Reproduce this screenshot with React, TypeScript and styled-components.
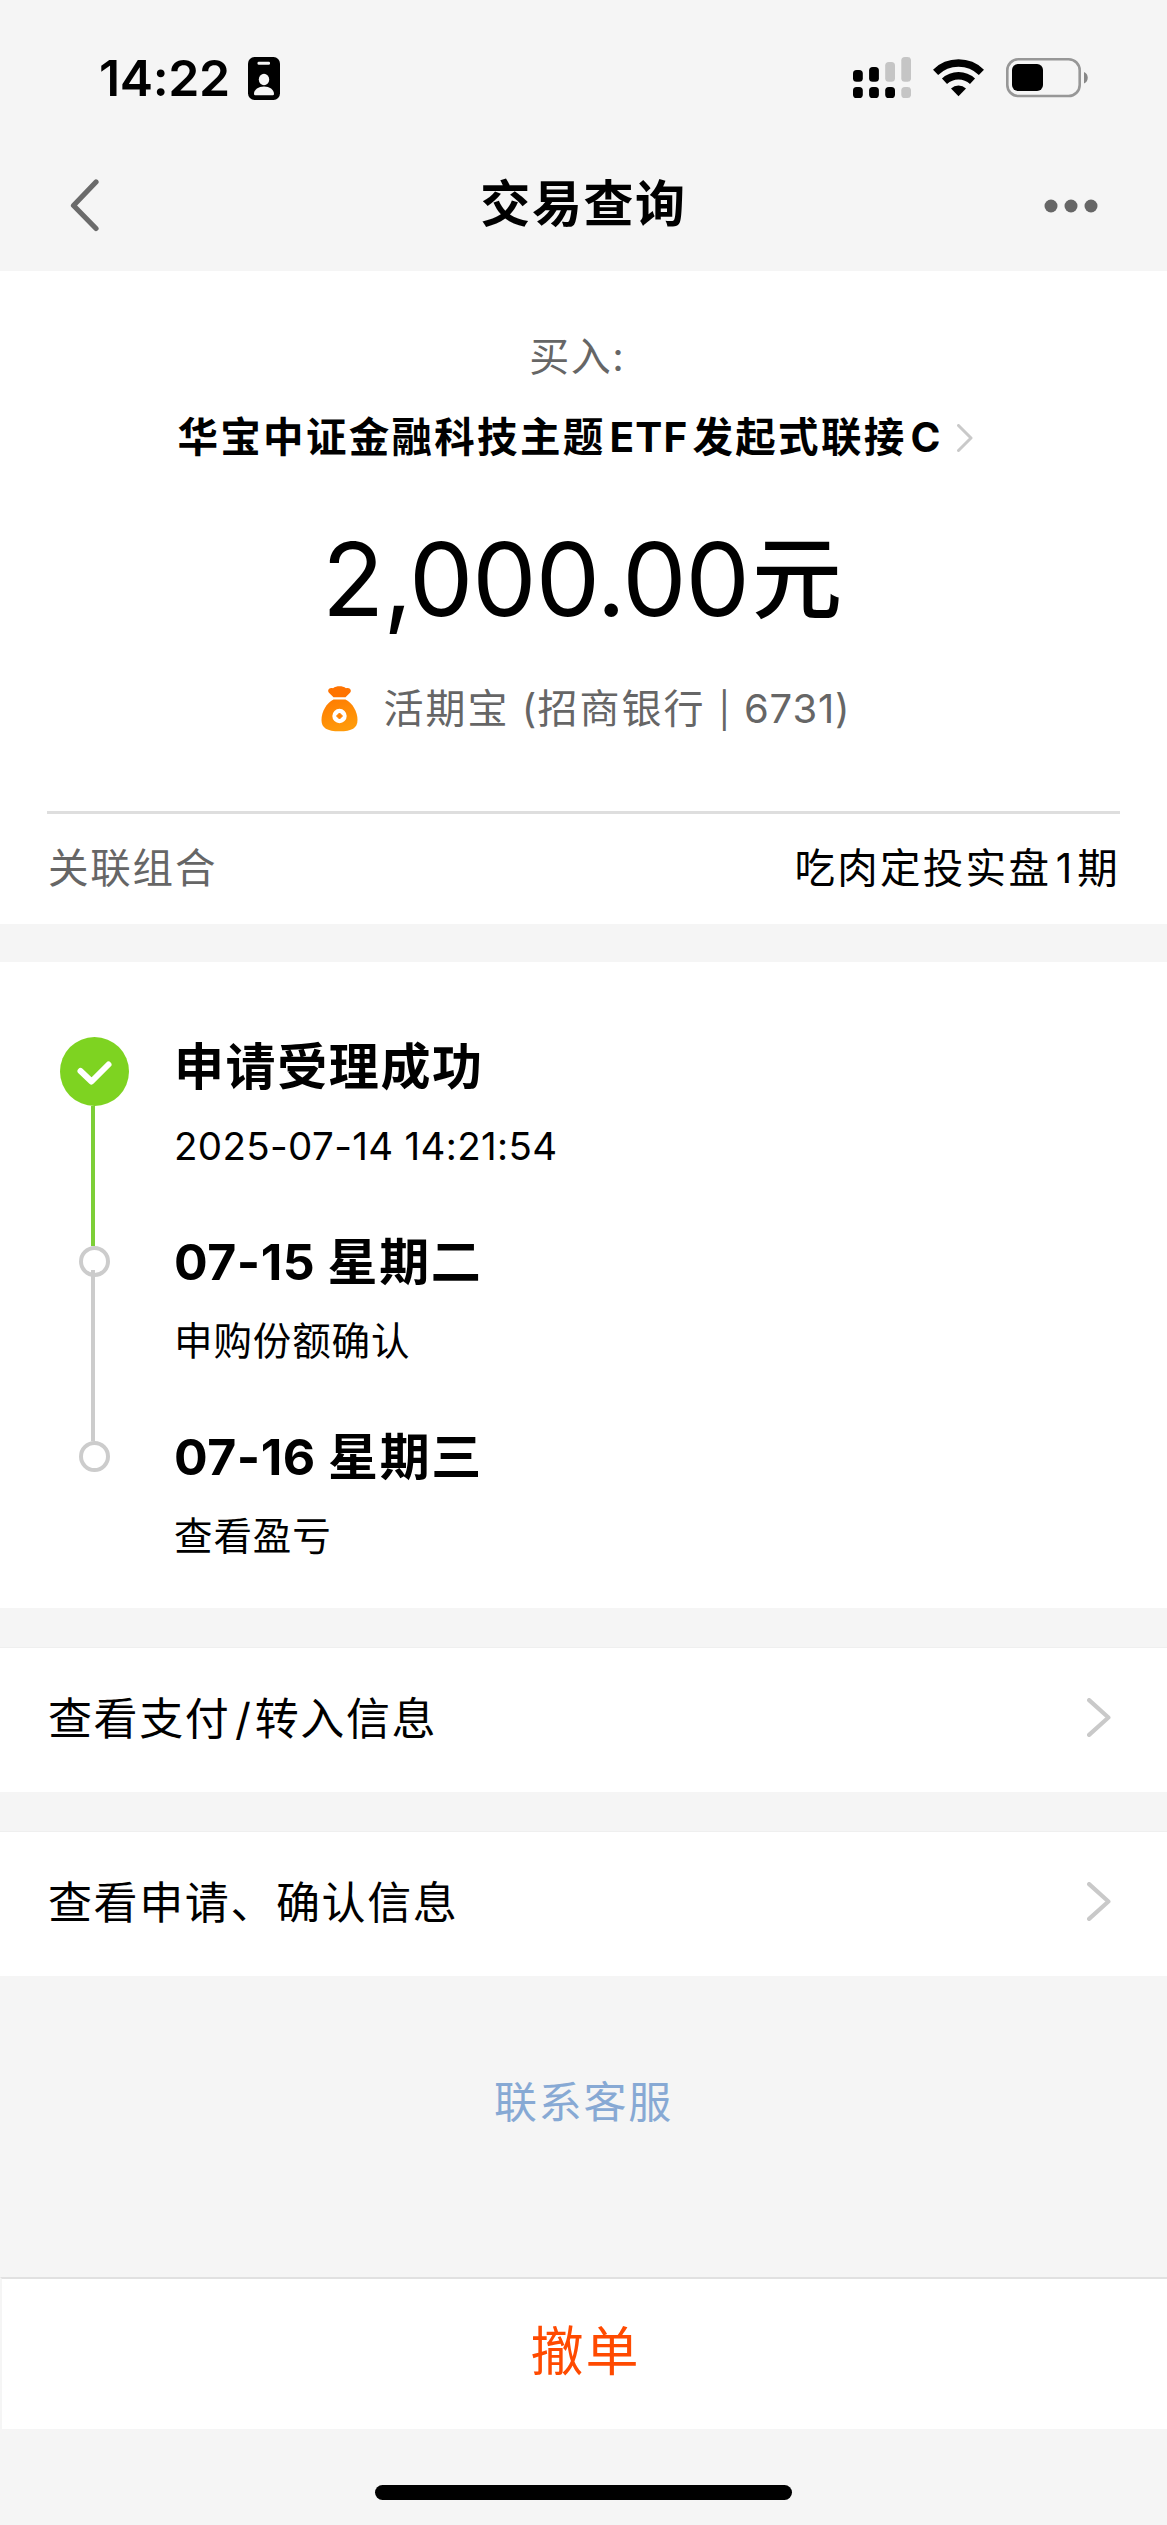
import React from "react";
import styled, { createGlobalStyle } from "styled-components";

const GlobalStyle = createGlobalStyle`
  * { box-sizing: border-box; }
  body {
    margin: 0;
    background: #f4f4f4;
    font-family: Inter, "Noto Sans CJK SC", "Noto Sans", sans-serif;
    color: #000;
  }
  svg { display: block; flex: none; }
`;

const Screen = styled.div`
  width: 1167px;
  height: 2525px;
  background: #f5f5f5;
  display: flex;
  flex-direction: column;
  overflow: hidden;

  & > * { flex: none; }
`;

const StatusBar = styled.header`
  height: 136px;
  padding: 57px 79px 0 99px;
  display: flex;
  align-items: flex-start;
  justify-content: space-between;
`;

const StatusGroup = styled.div<{ $gap: number }>`
  display: flex;
  align-items: center;
  gap: ${(p) => p.$gap}px;
  height: 43px;
`;

const Clock = styled.span`
  font-size: 50px;
  font-weight: 600;
  line-height: 43px;
  letter-spacing: -0.4px;
`;

const NavBar = styled.nav`
  height: 135px;
  padding: 0 69px 0 69px;
  display: grid;
  grid-template-columns: 60px 1fr 60px;
  align-items: center;
`;

const NavStart = styled.div`
  padding-top: 3px;
`;

const NavTitle = styled.h1`
  margin: 0;
  text-align: center;
  font-size: 50px;
  font-weight: 600;
  line-height: 60px;
  letter-spacing: 1.6px;
`;

const NavEnd = styled.div`
  display: flex;
  justify-content: flex-end;
  padding-top: 5px;
`;

const Summary = styled.section`
  height: 653px;
  padding: 56px 47px 0;
  background: #fff;
  display: flex;
  flex-direction: column;

  & > * { flex: none; }
`;

const Centered = styled.div<{ $height: number }>`
  display: flex;
  justify-content: center;
  align-items: center;
  height: ${(p) => p.$height}px;
`;

const Text = styled.span<{
  $size: number;
  $spacing?: number;
  $weight?: number;
  $color?: string;
}>`
  white-space: pre;
  line-height: 1.2;
  font-size: ${(p) => p.$size}px;
  letter-spacing: ${(p) => p.$spacing ?? 0}px;
  font-weight: ${(p) => p.$weight ?? 400};
  color: ${(p) => p.$color ?? "#000"};
`;

const Latin = styled.span<{ $before?: number; $after?: number; $spacing?: number; $weight?: number }>`
  margin-left: ${(p) => p.$before ?? 0}px;
  margin-right: ${(p) => p.$after ?? 0}px;
  letter-spacing: ${(p) => p.$spacing ?? 0}px;
  font-weight: ${(p) => p.$weight ?? "inherit"};
`;

const Pipe = styled.span`
  margin: 0 1px;
  font-size: 35px;
`;

const Direction = styled(Centered)`
  padding-right: 14px;
`;

const FundName = styled(Centered)`
  margin-top: 21px;
  padding-right: 16px;
  gap: 17px;
`;

const Amount = styled(Centered)`
  margin-top: 51px;
  padding-right: 3px;
`;

const Unit = styled(Text)`
  margin: 0 0 1px 3px;
`;

const Account = styled(Centered)`
  margin-top: 40px;
  padding-left: 4px;
  gap: 26px;
`;

const LinkedPlan = styled.div`
  margin-top: 72px;
  height: 113px;
  border-top: 3px solid #dedede;
  padding: 0 0 0 1px;
  display: flex;
  justify-content: space-between;
  align-items: center;
`;

const Timeline = styled.section`
  margin-top: 38px;
  height: 646px;
  padding: 75px 60px 0;
  background: #fff;
`;

const Step = styled.div<{ $height: number }>`
  display: flex;
  height: ${(p) => p.$height}px;
`;

const Rail = styled.div`
  width: 69px;
  margin-right: 45px;
  display: flex;
  flex-direction: column;
  align-items: center;
`;

const RailLine = styled.div<{ $color: string; $overlap?: number }>`
  width: 4px;
  flex: 1;
  margin: ${(p) => -(p.$overlap ?? 0)}px 3px 0 0;
  background: ${(p) => p.$color};
`;

const Dot = styled.div`
  flex: none;
  width: 31px;
  height: 31px;
  border: 4px solid #ccc;
  border-radius: 50%;
`;

const StepBody = styled.div<{ $shift: number }>`
  display: flex;
  flex-direction: column;
  margin-top: ${(p) => p.$shift}px;
`;

const StepTitle = styled.h2`
  margin: 0;
  font-size: 50px;
  font-weight: 600;
  line-height: 60px;
  letter-spacing: 1.6px;
  white-space: pre;
`;

const StepNote = styled.div<{ $spacing: number }>`
  margin-top: 24px;
  font-size: 38.5px;
  line-height: 50px;
  letter-spacing: ${(p) => p.$spacing}px;
`;

const LinkRow = styled.div`
  margin-top: 40px;
  height: 144px;
  padding: 0 56px 1px 48px;
  background: #fff;
  box-shadow: 0 -1px 0 #efefef;
  display: flex;
  justify-content: space-between;
  align-items: center;

  svg { margin-bottom: 4px; }
`;

const Support = styled(Centered)`
  margin-top: 102px;
`;

const CancelBar = styled.button`
  margin: 149px 0 0;
  height: 152px;
  padding: 0 0 2px 2px;
  border: 0;
  border-top: 2px solid #e1e1e1;
  border-left: 2px solid #f5f5f5;
  background: #fff;
  font-family: inherit;
  display: flex;
  justify-content: center;
  align-items: center;
`;

const HomeIndicator = styled.div`
  width: 417px;
  height: 15px;
  margin: 56px auto 0;
  border-radius: 8px;
  background: #000;
`;

const BadgeIcon = () => (
  <svg width="32" height="43" viewBox="0 0 32 43">
    <rect width="32" height="43" rx="6.5" fill="#000" />
    <rect x="9.5" y="4.8" width="12.5" height="3" rx="1.3" fill="#f5f5f5" />
    <ellipse cx="16" cy="22.5" rx="5.2" ry="5.8" fill="#f5f5f5" />
    <path d="M6 37c0-4.500 4.500-7.500 10-7.500s10 3 10 7.500q0 1.200-1.200 1.200H7.200Q6 38.200 6 37z" fill="#f5f5f5" />
  </svg>
);

const SignalIcon = () => (
  <svg width="58" height="43" viewBox="0 0 58 43">
    {[13, 10, 5, 0].map((top, i) => (
      <rect key={i} x={i * 16.1} y={top} width="9.800" height={24.8 - top} rx="3.600" fill={i < 2 ? "#000" : "#c5c5c5"} />
    ))}
    {[0, 1, 2, 3].map((i) => (
      <rect key={i} x={i * 16.1} y="30" width="9.800" height="11" rx="3.600" fill={i < 3 ? "#000" : "#c5c5c5"} />
    ))}
  </svg>
);

const WifiIcon = () => (
  <svg width="51" height="43" viewBox="0 0 51 43">
    <g fill="none" stroke="#000" strokeWidth="7.400">
      <path d="M2.600 15.300A33 33 0 0 1 48.400 15.300" />
      <path d="M11.500 24.300A20.500 20.500 0 0 1 39.500 24.300" />
    </g>
    <path d="M25.500 39.300L18 31.500a11 11 0 0 1 15 0z" fill="#000" />
  </svg>
);

const BatteryIcon = () => (
  <svg width="82" height="43" viewBox="0 0 82 43">
    <rect x="1.300" y="2.300" width="72.400" height="36.700" rx="11" fill="none" stroke="#979797" strokeWidth="2.600" />
    <rect x="6" y="7" width="31" height="27" rx="6" fill="#000" />
    <path d="M78 15c5 1.800 5 9.700 0 11.500z" fill="#888" />
  </svg>
);

const BackIcon = () => (
  <svg width="32" height="54" viewBox="0 0 32 54">
    <path d="M27 4L4.500 27.500L27 50.500" fill="none" stroke="#6b6b6b" strokeWidth="5.200" strokeLinecap="round" strokeLinejoin="round" />
  </svg>
);

const MoreIcon = () => (
  <svg width="54" height="14" viewBox="0 0 54 14">
    {[7, 27, 47].map((x) => (
      <circle key={x} cx={x} cy="7" r="6.500" fill="#666" />
    ))}
  </svg>
);

const Chevron = ({ width, height, stroke }: { width: number; height: number; stroke: number }) => (
  <svg width={width} height={height} viewBox={`0 0 ${width} ${height}`}>
    <path
      d={`M${stroke / 2} ${stroke / 2}L${width - stroke / 2 - 0.5} ${height / 2}L${stroke / 2} ${height - stroke / 2}`}
      fill="none"
      stroke="#c9c9c9"
      strokeWidth={stroke}
      strokeLinecap="round"
      strokeLinejoin="round"
    />
  </svg>
);

const MoneyBagIcon = () => (
  <svg width="37" height="46" viewBox="0 0 37 46">
    <defs>
      <linearGradient id="bag" x1="0" y1="0" x2="0.4" y2="1">
        <stop offset="0" stopColor="#ff7a00" />
        <stop offset="1" stopColor="#ff9a0a" />
      </linearGradient>
    </defs>
    <path d="M12.500 11.300L8.200 7C5.500 4 8.500 1 12 2.200C15.500-.4 21.500-.4 25 2.200C28.500 1 31.500 4 28.800 7L24.500 11.300z" fill="#ff7300" />
    <path d="M12.500 13.500H24.500C31.500 17 36.500 25.500 36.500 34C36.500 42 31 45.300 18.500 45.300S.5 42 .5 34C.5 25.500 5.500 17 12.500 13.500z" fill="url(#bag)" />
    <circle cx="18.500" cy="30" r="7.200" fill="#fff" />
    <path d="M18.500 27L21.500 30L18.500 33L15.500 30z" fill="#ff8200" stroke="#ff8200" strokeLinejoin="round" />
  </svg>
);

const DoneIcon = () => (
  <svg width="69" height="69" viewBox="0 0 69 69">
    <circle cx="34.500" cy="34.500" r="34.500" fill="#7ed321" />
    <path d="M20.500 34L31.500 44.500L48.500 27.500" fill="none" stroke="#fff" strokeWidth="6" strokeLinecap="round" strokeLinejoin="round" />
  </svg>
);

export default function App() {
  return (
    <Screen lang="zh-CN">
      <GlobalStyle />
      <StatusBar>
        <StatusGroup $gap={18}>
          <Clock>14:22</Clock>
          <BadgeIcon />
        </StatusGroup>
        <StatusGroup $gap={22}>
          <SignalIcon />
          <WifiIcon />
          <BatteryIcon />
        </StatusGroup>
      </StatusBar>
      <NavBar>
        <NavStart>
          <BackIcon />
        </NavStart>
        <NavTitle>交易查询</NavTitle>
        <NavEnd>
          <MoreIcon />
        </NavEnd>
      </NavBar>

      <Summary>
        <Direction $height={60}>
          <Text $size={40} $spacing={1.5} $color="#666">买入<Latin>:</Latin></Text>
        </Direction>
        <FundName $height={60}>
          <Text $size={40.5} $spacing={2.3} $weight={600}>
            华宝中证金融科技主题<Latin $before={4} $after={4} $spacing={1.2} $weight={700}>ETF</Latin>发起式联接<Latin $before={4} $weight={700}>C</Latin>
          </Text>
          <Chevron width={16} height={28} stroke={3} />
        </FundName>
        <Amount $height={120}>
          <Text $size={102} $spacing={-1}>2,000.00</Text>
          <Unit $size={90} $weight={500}>元</Unit>
        </Amount>
        <Account $height={60}>
          <MoneyBagIcon />
          <Text $size={40} $spacing={2} $color="#666">
            活期宝<Latin $spacing={1}> (</Latin>招商银行<Latin $spacing={0.8}> <Pipe>|</Pipe> 6731)</Latin>
          </Text>
        </Account>
        <LinkedPlan>
          <Text $size={40.5} $spacing={1.8} $color="#666">关联组合</Text>
          <Text $size={40.5} $spacing={2.3}>吃肉定投实盘<Latin $before={4.5} $after={5}>1</Latin>期</Text>
        </LinkedPlan>
      </Summary>

      <Timeline>
        <Step $height={209}>
          <Rail>
            <DoneIcon />
            <RailLine $color="#7dcf37" />
          </Rail>
          <StepBody $shift={0}>
            <StepTitle>申请受理成功</StepTitle>
            <StepNote $spacing={0.35}>2025-07-14 14:21:54</StepNote>
          </StepBody>
        </Step>
        <Step $height={195}>
          <Rail>
            <Dot />
            <RailLine $color="#ccc" $overlap={7} />
          </Rail>
          <StepBody $shift={-14}>
            <StepTitle><Latin $weight={700} $spacing={0.5}>07-15 </Latin>星期二</StepTitle>
            <StepNote $spacing={0.9}>申购份额确认</StepNote>
          </StepBody>
        </Step>
        <Step $height={120}>
          <Rail>
            <Dot />
          </Rail>
          <StepBody $shift={-14}>
            <StepTitle><Latin $weight={700} $spacing={0.5}>07-16 </Latin>星期三</StepTitle>
            <StepNote $spacing={0.9}>查看盈亏</StepNote>
          </StepBody>
        </Step>
      </Timeline>

      <LinkRow>
        <Text $size={44} $spacing={1.6}>查看支付<Latin $before={4.5} $after={4}>/</Latin>转入信息</Text>
        <Chevron width={24} height={39} stroke={4.2} />
      </LinkRow>
      <LinkRow>
        <Text $size={44} $spacing={1.6}>查看申请、确认信息</Text>
        <Chevron width={24} height={39} stroke={4.2} />
      </LinkRow>

      <Support $height={50}>
        <Text $size={43} $spacing={1.8} $color="#87a9d4">联系客服</Text>
      </Support>
      <CancelBar>
        <Text $size={53} $spacing={2} $color="#ff4a00">撤单</Text>
      </CancelBar>
      <HomeIndicator />
    </Screen>
  );
}
